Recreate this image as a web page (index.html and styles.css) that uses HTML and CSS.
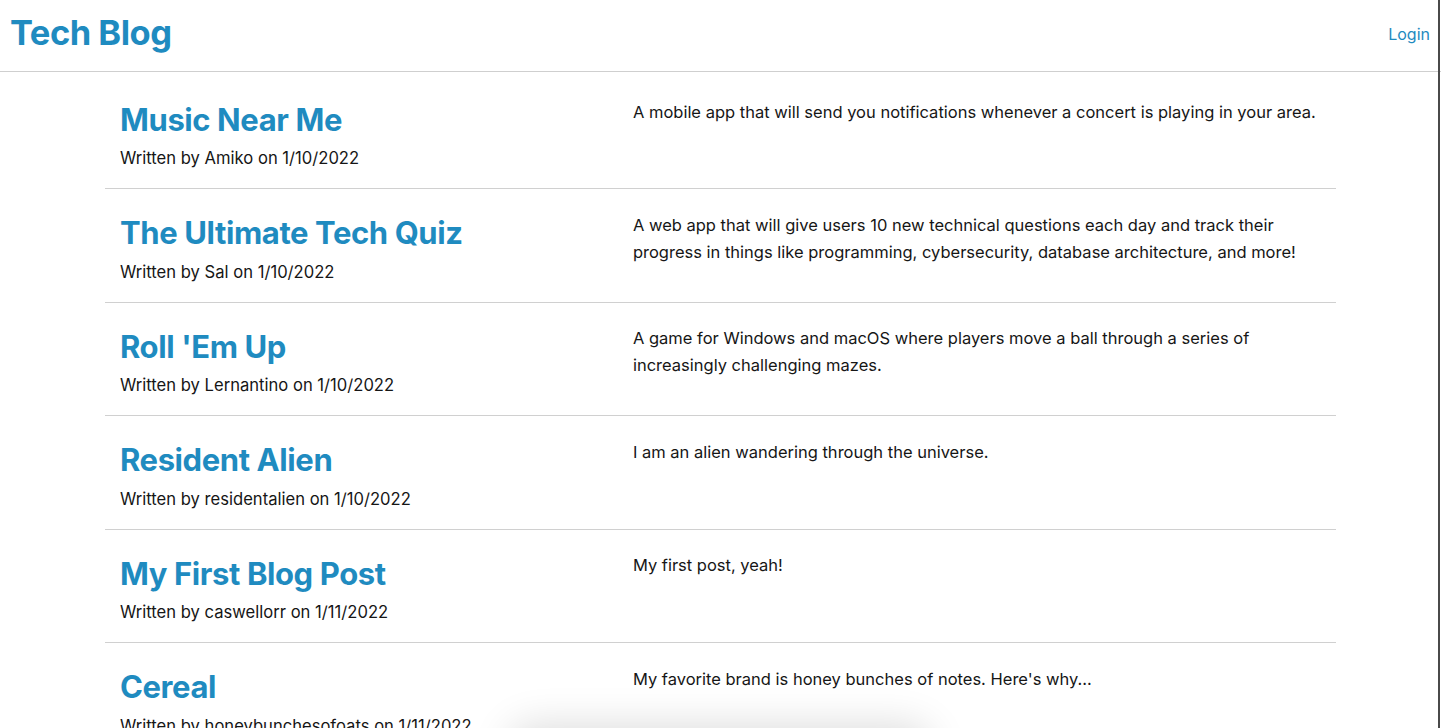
FILE: index.html
```html
<!DOCTYPE html>
<html lang="en">
<head>
<meta charset="utf-8">
<title>Tech Blog</title>
<link rel="stylesheet" href="styles.css">
</head>
<body>
<header class="site-header">
  <a class="brand" href="#">Tech Blog</a>
  <nav class="nav"><a class="nav-link" href="#">Login</a></nav>
</header>
<main class="container">
  <article class="post">
    <div class="post-head">
      <h2 class="post-title">Music Near Me</h2>
      <p class="post-meta">Written by Amiko on 1/10/2022</p>
    </div>
    <p class="post-body">A mobile app that will send you notifications whenever a concert is playing in your area.</p>
  </article>
  <article class="post">
    <div class="post-head">
      <h2 class="post-title">The Ultimate Tech Quiz</h2>
      <p class="post-meta">Written by Sal on 1/10/2022</p>
    </div>
    <p class="post-body">A web app that will give users 10 new technical questions each day and track their progress in things like programming, cybersecurity, database architecture, and more!</p>
  </article>
  <article class="post">
    <div class="post-head">
      <h2 class="post-title">Roll 'Em Up</h2>
      <p class="post-meta">Written by Lernantino on 1/10/2022</p>
    </div>
    <p class="post-body">A game for Windows and macOS where players move a ball through a series of increasingly challenging mazes.</p>
  </article>
  <article class="post">
    <div class="post-head">
      <h2 class="post-title">Resident Alien</h2>
      <p class="post-meta">Written by residentalien on 1/10/2022</p>
    </div>
    <p class="post-body">I am an alien wandering through the universe.</p>
  </article>
  <article class="post">
    <div class="post-head">
      <h2 class="post-title">My First Blog Post</h2>
      <p class="post-meta">Written by caswellorr on 1/11/2022</p>
    </div>
    <p class="post-body">My first post, yeah!</p>
  </article>
  <article class="post">
    <div class="post-head">
      <h2 class="post-title">Cereal</h2>
      <p class="post-meta">Written by honeybunchesofoats on 1/11/2022</p>
    </div>
    <p class="post-body">My favorite brand is honey bunches of notes. Here's why...</p>
  </article>
</main>
<div class="window-edge"></div>
<div class="floating-shadow"></div>
</body>
</html>
```
FILE: styles.css
```css
* { box-sizing: border-box; }
html, body { margin: 0; padding: 0; }
body {
  font-family: Inter, "Noto Sans", "Liberation Sans", sans-serif;
  color: #161616;
  background: #fff;
  overflow: hidden;
}
a { text-decoration: none; color: #1f8bc0; }

.site-header {
  display: flex;
  align-items: center;
  justify-content: space-between;
  height: 72px;
  padding: 0 11px 0 10px;
  border-bottom: 1px solid #cfcfcf;
}
.brand {
  font-size: 34.5px;
  font-weight: 700;
  letter-spacing: -0.5px;
  color: #1f8bc0;
  margin-top: -7px;
}
.nav {
  margin-top: -4px;
}
.nav-link {
  font-size: 16px;
  color: #1f8bc0;
}

.container {
  width: 1231px;
  margin: 0 auto;
  padding-top: 4px;
}
.post {
  display: grid;
  grid-template-columns: 5fr 7fr;
  padding: 20px 0 16.3px;
  border-bottom: 1px solid #d0d0d0;
}
.post-head, .post-body { padding: 0 15px; }
.post-title {
  margin: 5px 0 7px;
  font-size: 31px;
  line-height: 1.2;
  font-weight: 700;
  letter-spacing: -0.4px;
  color: #1f8bc0;
}
.post-meta {
  margin: 0;
  font-size: 16.6px;
  line-height: 27px;
}
.post-body {
  margin: 0;
  padding-top: 2.5px;
  font-size: 16.5px;
  line-height: 27px;
}

.window-edge {
  position: fixed;
  top: 0;
  right: 1px;
  width: 2px;
  height: 100%;
  background: #4a4a4a;
}
.floating-shadow {
  position: fixed;
  left: 520px;
  width: 400px;
  top: 735px;
  height: 60px;
  border-radius: 12px;
  background: #fff;
  box-shadow: 0 0 40px 10px rgba(0,0,0,0.14);
}
```
